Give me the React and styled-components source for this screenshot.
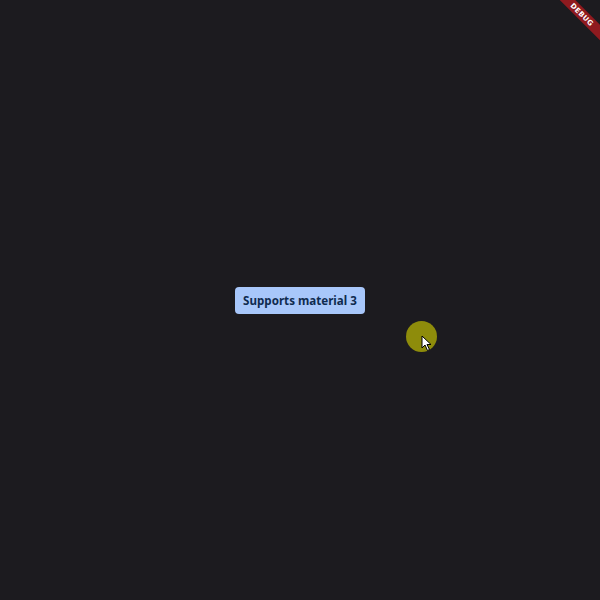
import React from 'react'
import styled, { createGlobalStyle } from 'styled-components'

const GlobalStyle = createGlobalStyle`
  html, body, #root {
    margin: 0;
    padding: 0;
    height: 100%;
  }
  body {
    background: #1c1b1f;
    font-family: "Noto Sans", "Liberation Sans", sans-serif;
    overflow: hidden;
  }
`

const Screen = styled.div`
  position: relative;
  width: 600px;
  height: 600px;
  display: flex;
  align-items: center;
  justify-content: center;
  background: #1c1b1f;
  overflow: hidden;
`

const Tooltip = styled.div`
  height: 27px;
  padding: 0 8px;
  display: flex;
  align-items: center;
  background: #a8c7fa;
  border-radius: 4px;
  color: #0f2b4f;
  font-size: 11.6px;
  font-weight: 700;
  box-sizing: border-box;
`

const Banner = styled.div`
  position: absolute;
  top: 9px;
  right: -22px;
  width: 80px;
  height: 11px;
  background: #8f1a1f;
  transform: rotate(45deg);
  display: flex;
  align-items: center;
  justify-content: center;
  color: #fff;
  font-family: "DejaVu Sans", sans-serif;
  font-size: 7px;
  font-weight: 900;
  letter-spacing: 0.3px;
`

const Touch = styled.div`
  position: absolute;
  left: 406px;
  top: 321px;
  width: 31px;
  height: 31px;
  border-radius: 50%;
  background: #8e8c0b;
`

const Cursor = styled.svg`
  position: absolute;
  left: 421px;
  top: 335px;
`

export default function App() {
  return (
    <>
      <GlobalStyle />
      <Screen>
        <Tooltip>Supports material 3</Tooltip>
        <Touch />
        <Cursor width="12" height="17" viewBox="0 0 12 17">
          <path d="M1 1 L1 13 L4 10 L6.5 15.5 L8.5 14.5 L6 9.5 L10 9.5 Z" fill="#fff" stroke="#000" strokeWidth="1" strokeLinejoin="round" />
        </Cursor>
        <Banner>DEBUG</Banner>
      </Screen>
    </>
  )
}
